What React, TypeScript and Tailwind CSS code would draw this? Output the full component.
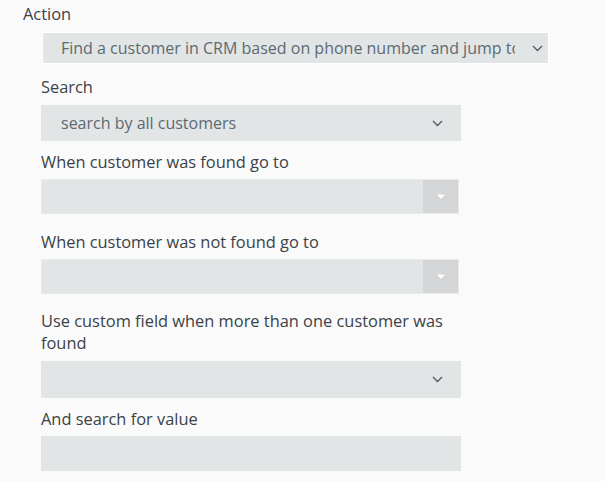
import React from "react";

const font = { fontFamily: '"Open Sans", "Liberation Sans", sans-serif' };

const Chevron = () => (
  <svg width="11" height="7" viewBox="0 0 11 7" className="shrink-0">
    <path d="M1 1 L5.5 5.5 L10 1" fill="none" stroke="#4b5a63" strokeWidth="1.3" />
  </svg>
);

type SelectProps = {
  value?: string;
  className?: string;
};

const NativeSelect = ({ value, className = "" }: SelectProps) => (
  <div
    className={`flex items-center justify-between bg-[#e2e5e6] text-[16px] text-[#5c6a72] pl-[20px] pr-[18px] ${className}`}
  >
    <span className="truncate whitespace-nowrap">{value}</span>
    <Chevron />
  </div>
);

const ComboSelect = ({ className = "" }: { className?: string }) => (
  <div className={`flex bg-[#e2e5e6] border border-[#e9ebec] ${className}`}>
    <div className="flex-1" />
    <div className="w-[35px] bg-[#d3d5d6] flex items-center justify-center">
      <svg width="10" height="6" viewBox="0 0 10 6">
        <path d="M1 0.5 L9 0.5 L5 5 Z" fill="#ffffff" />
      </svg>
    </div>
  </div>
);

const Label = ({ children, className = "" }: { children: React.ReactNode; className?: string }) => (
  <div className={`text-[16.4px] leading-[22px] text-[#3b4247] font-[500] ${className}`}>{children}</div>
);

export default function App() {
  return (
    <div className="w-[605px] h-[481px] bg-[#fafafa] overflow-hidden" style={font}>
      <div className="pt-[3px] pl-[23px]">
        <Label>Action</Label>
        <div className="mt-[7px] ml-[19px] w-[507px] h-[32px] border border-white">
          <div className="h-full flex items-center justify-between bg-[#e2e5e6] text-[16px] text-[#5c6a72] pl-[18px] pr-[5px]">
            <span className="whitespace-nowrap overflow-hidden w-[454px]">
              Find a customer in CRM based on phone number and jump to
            </span>
            <Chevron />
          </div>
        </div>
      </div>

      {/* Fields */}
      <div className="pl-[41px]">
        <Label className="mt-[12px]">Search</Label>
        <NativeSelect value="search by all customers" className="mt-[7px] w-[420px] h-[36px]" />

        <Label className="mt-[10px]">When customer was found go to</Label>
        <ComboSelect className="mt-[6px] w-[418px] h-[35px]" />

        <Label className="mt-[17px]">When customer was not found go to</Label>
        <ComboSelect className="mt-[6px] w-[418px] h-[35px]" />

        <Label className="mt-[16px] w-[420px]">
          Use custom field when more than one customer was found
        </Label>
        <NativeSelect className="mt-[7px] w-[420px] h-[37px]" />

        <Label className="mt-[10px]">And search for value</Label>
        <div className="mt-[6px] w-[420px] h-[35px] bg-[#e2e5e6]" />
      </div>
    </div>
  );
}
